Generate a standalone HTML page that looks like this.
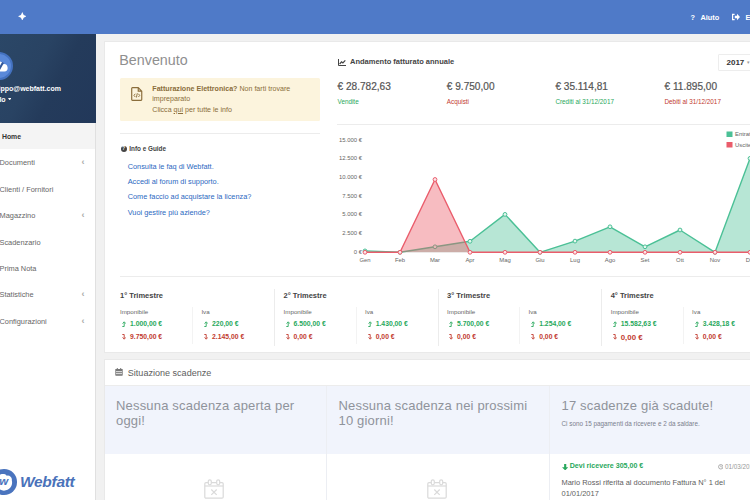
<!DOCTYPE html>
<html lang="it">
<head>
<meta charset="utf-8">
<title>Webfatt - Home</title>
<style>
*{box-sizing:border-box;margin:0;padding:0}
html,body{width:750px;height:500px;overflow:hidden}
body{position:relative;background:#f1f1f1;font-family:"Liberation Sans",sans-serif;color:#444;font-size:7px}
.t{position:absolute;white-space:nowrap;line-height:1}
.abs{position:absolute}
b,.b{font-weight:bold}
/* top bar */
#top{left:0;top:0;width:750px;height:34px;background:#4f7ac8}
#top .t{color:#fff;font-weight:bold;font-size:7.35px}
/* sidebar */
#side{left:0;top:34px;width:96.200px;height:466px;background:#fff;border-right:1px solid #e0e0e0}
#sidehead{left:0;top:0;width:95.500px;height:88.500px;background:linear-gradient(118deg,#2b4767 0%,#294363 38%,#243b5b 58%,#22385a 100%)}
#avatar{left:-15.600px;top:18px;width:28.4px;height:28.4px;border-radius:50%;background:#5a89d9;border:2.2px solid #4472c0}
.nav{color:#666;font-size:7.4px}
.chev{color:#a8a8a8;font-size:9px;font-weight:bold}
#homerow{left:0;top:88.500px;width:95.200px;height:26.200px;background:#f4f4f4}
/* cards */
.card{background:#fff;border:1px solid #e9e9e9}
.hr{background:#ececec;height:1px}
.vr{background:#ececec;width:1px}
.green{color:#28a85c}
.red{color:#c23b30}
a{color:#2b69bf;text-decoration:none}
</style>
</head>
<body>

<!-- TOP BAR -->
<div id="top" class="abs">
  <svg class="abs" style="left:17.700px;top:11.800px" width="8.600" height="8.600" viewBox="0 0 10 10"><path d="M5 0 L6.600 3.400 L10 5 L6.600 6.600 L5 10 L3.400 6.600 L0 5 L3.400 3.400 Z" fill="#fff"/></svg>
  <span class="t" style="left:690.400px;top:13.500px">?</span>
  <span class="t" id="aiuto" style="left:700.500px;top:13.500px">Aiuto</span>
  <svg class="abs" style="left:732px;top:13.300px" width="8" height="8" viewBox="0 0 8 8"><path d="M0 .8h2.600v1.200H1.200v4h1.400v1.200H0z M2.800 2.700h2.200V.8l3 3.200-3 3.200V5.300H2.800z" fill="#fff"/></svg>
  <span class="t" style="left:745.500px;top:13.500px">Esci</span>
</div>

<!-- SIDEBAR -->
<div id="side" class="abs">
  <div id="sidehead" class="abs">
    <div id="avatar" class="abs"></div>
    <svg class="abs" style="left:-8px;top:25px" width="18" height="14" viewBox="0 0 18 14"><path d="M3 12.5a3 3 0 0 1-.3-6 4.5 4.5 0 0 1 8.6-1.3 3.6 3.6 0 0 1 1.2 7.3z" fill="#fff"/><path d="M5.600 5.600l2 4 3.400-6" stroke="#34589a" stroke-width="2" fill="none"/></svg>
    <span class="t b" id="email" style="left:-7.7px;top:51.3px;color:#fff;font-size:7px">filippo@webfatt.com</span>
    <span class="t b" style="left:-6.8px;top:61.6px;color:#fff;font-size:7px">Filo</span>
    <svg class="abs" style="left:7.6px;top:63.8px" width="3.4" height="2.4" viewBox="0 0 34 24"><path d="M0 0h34L17 24z" fill="#fff"/></svg>
  </div>
  <div id="homerow" class="abs"></div>
  <span class="t nav b" style="left:2px;top:99.5px;color:#333;font-size:6.85px">Home</span>
  <span class="t nav" id="nav1" style="left:-0.5px;top:125px">Documenti</span>
  <span class="t nav" style="left:-0.5px;top:152px">Clienti / Fornitori</span>
  <span class="t nav" style="left:-0.5px;top:178px">Magazzino</span>
  <span class="t nav" style="left:-0.5px;top:205px">Scadenzario</span>
  <span class="t nav" style="left:-0.5px;top:231px">Prima Nota</span>
  <span class="t nav" style="left:-0.5px;top:257px">Statistiche</span>
  <span class="t nav" style="left:-0.5px;top:284px">Configurazioni</span>
  <span class="t chev" style="left:81.5px;top:124px">‹</span>
  <span class="t chev" style="left:81.5px;top:177px">‹</span>
  <span class="t chev" style="left:81.5px;top:256px">‹</span>
  <span class="t chev" style="left:81.5px;top:283px">‹</span>
  <!-- logo -->
  <div class="abs" style="left:-8.750px;top:435px;width:25.700px;height:25.700px;border-radius:50%;background:#4a74be"></div>
  <svg class="abs" style="left:-4.900px;top:439.600px" width="18" height="17.100" viewBox="0 0 20 19"><path d="M10 18.500a9 9 0 0 1-8.800-7.500 4 4 0 0 1 2.300-6.800 5.500 5.500 0 0 1 9.600-2.300 4.600 4.600 0 0 1 5.600 5.300 9 9 0 0 1-8.700 11.300z" fill="#fff"/></svg>
  <span class="t" style="left:-0.800px;top:442.300px;color:#4a74be;font-size:11.500px;font-weight:bold;font-style:italic">w</span>
  <span class="t" id="logo" style="left:20px;top:440px;color:#4a72ba;font-size:15.500px;font-weight:bold;font-style:italic;letter-spacing:-.3px">Webfatt</span>
</div>

<!-- CARD 1 -->
<div class="card abs" style="left:104px;top:40.5px;width:660px;height:312px"></div>
<span class="t" id="benv" style="left:119.3px;top:53px;font-size:14.3px;color:#8f8f8f">Benvenuto</span>

<!-- alert -->
<div class="abs" style="left:119.600px;top:77.500px;width:200.600px;height:43.700px;background:#fcf4dd;border-radius:1.500px"></div>
<svg class="abs" style="left:131px;top:86.5px" width="11.7" height="14" viewBox="0 0 10 12"><path d="M1.2 .6h5l3 3v7.2a.6.6 0 0 1-.6.6H1.2a.6.6 0 0 1-.6-.6V1.200a.6.6 0 0 1 .6-.6z M6.200 .6v3h3" fill="none" stroke="#8a6d3b" stroke-width="1"/><path d="M3.700 5.800l-1.200 1.400 1.200 1.400 M6.300 5.800l1.200 1.400-1.200 1.400 M5.400 5.400l-.8 3.600" fill="none" stroke="#8a6d3b" stroke-width=".8"/></svg>
<span class="t" id="al1" style="left:152.3px;top:85.6px;color:#8a6d3b;font-size:7.1px"><b>Fatturazione Elettronica?</b> Non farti trovare</span>
<span class="t" style="left:152.3px;top:96.1px;color:#8a6d3b;font-size:7.1px">impreparato</span>
<span class="t" style="left:152.3px;top:106.7px;color:#8a6d3b;font-size:7.1px">Clicca <u>qui</u> per tutte le info</span>

<div class="hr abs" style="left:120px;top:133px;width:200px"></div>
<svg class="abs" style="left:120.5px;top:145.800px" width="6" height="6" viewBox="0 0 6 6"><circle cx="3" cy="3" r="3" fill="#444"/></svg>
<span class="t b" style="left:121.900px;top:146.400px;font-size:5px;color:#fff">?</span>
<span class="t b" id="info" style="left:129.300px;top:145.800px;font-size:6.350px;color:#444">Info e Guide</span>
<a class="t" id="l1" style="left:127.700px;top:163px;font-size:7.350px">Consulta le faq di Webfatt.</a>
<a class="t" style="left:127.700px;top:177.700px;font-size:7.350px">Accedi al forum di supporto.</a>
<a class="t" style="left:127.700px;top:193px;font-size:7.350px">Come faccio ad acquistare la licenza?</a>
<a class="t" style="left:127.700px;top:208.700px;font-size:7.350px">Vuoi gestire più aziende?</a>

<!-- right panel header -->
<svg class="abs" style="left:337.500px;top:58.500px" width="8" height="7" viewBox="0 0 8 7"><path d="M.5 0v6.500h7.500" fill="none" stroke="#444" stroke-width="1"/><path d="M1.600 5l2-2.200 1.300 1.200 2.400-2.600" fill="none" stroke="#444" stroke-width="1.200"/></svg>
<span class="t b" id="andam" style="left:350px;top:58.300px;font-size:7.500px;color:#444">Andamento fatturato annuale</span>
<div class="abs" style="left:718px;top:53.500px;width:40px;height:17.500px;border:1px solid #ededed;background:#fff;border-radius:1px"></div>
<span class="t b" id="yr" style="left:726.500px;top:59px;font-size:8px;color:#333">2017</span>
<span class="t" style="left:746.500px;top:60px;font-size:5px;color:#999">▾</span>

<!-- totals -->
<span class="t tot" id="tot1" style="left:337.500px;top:81.800px">€ 28.782,63</span>
<span class="t tot" style="left:446.800px;top:81.800px">€ 9.750,00</span>
<span class="t tot" style="left:555.400px;top:81.800px">€ 35.114,81</span>
<span class="t tot" style="left:664.500px;top:81.800px">€ 11.895,00</span>
<span class="t sub green" style="left:337.500px;top:99.300px">Vendite</span>
<span class="t sub red" style="left:446.800px;top:99.300px">Acquisti</span>
<span class="t sub green" style="left:555.400px;top:99.300px">Crediti al 31/12/2017</span>
<span class="t sub red" style="left:664.500px;top:99.300px">Debiti al 31/12/2017</span>
<div class="hr abs" style="left:337px;top:123.600px;width:420px"></div>
<style>
.tot{font-size:10.100px;color:#555;-webkit-text-stroke:.2px #555}
.sub{font-size:6.350px}
.ax{font-size:5.900px;fill:#666;font-family:"Liberation Sans",sans-serif}
</style>

<!-- chart -->
<svg class="abs" style="left:330px;top:120px" width="420" height="150" viewBox="330 120 420 150">
<g class="ax" text-anchor="end"><text x="362" y="253.6">0 €</text><text x="362" y="234.9">2.500 €</text><text x="362" y="216.3">5.000 €</text><text x="362" y="197.6">7.500 €</text><text x="362" y="178.9">10.000 €</text><text x="362" y="160.2">12.500 €</text><text x="362" y="141.6">15.000 €</text></g>
<g class="ax" text-anchor="middle"><text x="365" y="261.500">Gen</text><text x="400" y="261.500">Feb</text><text x="435" y="261.500">Mar</text><text x="470" y="261.500">Apr</text><text x="505" y="261.500">Mag</text><text x="540" y="261.500">Giu</text><text x="575" y="261.500">Lug</text><text x="610" y="261.500">Ago</text><text x="645" y="261.500">Set</text><text x="680" y="261.500">Ott</text><text x="715" y="261.500">Nov</text><text x="750" y="261.500">Dic</text></g>
<path d="M365 250.9 L400 252.3 L435 246.8 L470 241.3 L505 214.4 L540 252.3 L575 241.1 L610 226.8 L645 246.8 L680 230.0 L715 252.3 L750 158.4 L750 252.3 L365 252.3 Z" fill="rgba(75,192,150,.4)"/>
<path d="M365 250.9 L400 252.3 L435 246.8 L470 241.3 L505 214.4 L540 252.3 L575 241.1 L610 226.8 L645 246.8 L680 230.0 L715 252.3 L750 158.4" fill="none" stroke="#4bc096" stroke-width="1.400" stroke-linejoin="round"/>
<g fill="#e6f6ef" stroke="#4bc096" stroke-width="1"><circle cx="365" cy="250.9" r="1.900"/><circle cx="400" cy="252.3" r="1.900"/><circle cx="435" cy="246.8" r="1.900"/><circle cx="470" cy="241.3" r="1.900"/><circle cx="505" cy="214.4" r="1.900"/><circle cx="540" cy="252.3" r="1.900"/><circle cx="575" cy="241.1" r="1.900"/><circle cx="610" cy="226.8" r="1.900"/><circle cx="645" cy="246.8" r="1.900"/><circle cx="680" cy="230.0" r="1.900"/><circle cx="715" cy="252.3" r="1.900"/><circle cx="750" cy="158.4" r="1.900"/></g>
<path d="M365 252.3 L400 252.3 L435 179.5 L470 252.3 L505 252.3 L540 252.3 L575 252.3 L610 252.3 L645 252.3 L680 252.3 L715 252.3 L750 252.3 L750 252.3 L365 252.3 Z" fill="rgba(235,87,100,.4)"/>
<path d="M365 252.3 L400 252.3 L435 179.5 L470 252.3 L505 252.3 L540 252.3 L575 252.3 L610 252.3 L645 252.3 L680 252.3 L715 252.3 L750 252.3" fill="none" stroke="#ea5c6b" stroke-width="1.400" stroke-linejoin="round"/>
<g fill="#fbe6e9" stroke="#ea5c6b" stroke-width="1"><circle cx="365" cy="252.3" r="1.900"/><circle cx="400" cy="252.3" r="1.900"/><circle cx="435" cy="179.5" r="1.900"/><circle cx="470" cy="252.3" r="1.900"/><circle cx="505" cy="252.3" r="1.900"/><circle cx="540" cy="252.3" r="1.900"/><circle cx="575" cy="252.3" r="1.900"/><circle cx="610" cy="252.3" r="1.900"/><circle cx="645" cy="252.3" r="1.900"/><circle cx="680" cy="252.3" r="1.900"/><circle cx="715" cy="252.3" r="1.900"/><circle cx="750" cy="252.3" r="1.900"/></g>
<rect x="726.500" y="131.500" width="6" height="5.500" fill="#4bc096"/><rect x="726.500" y="142" width="6" height="5.500" fill="#ea5c6b"/>
<text class="ax" x="735" y="136.400">Entrate</text><text class="ax" x="735" y="146.900">Uscite</text>
</svg>

<div class="hr abs" style="left:120px;top:275.500px;width:640px"></div>

<!-- quarters -->
<style>
.qt{font-size:7.500px;font-weight:bold;color:#444}
.ql{font-size:6.200px;color:#666}
.qv{font-size:6.800px;font-weight:bold}
</style>
<div id="quarters">
<span class="t qt" style="left:120.0px;top:292px">1° Trimestre</span>
<span class="t ql" style="left:120.0px;top:309.100px">Imponibile</span>
<span class="t ql" style="left:201.4px;top:309.100px">Iva</span>
<svg class="abs" style="left:122.2px;top:320.8px" width="4" height="6" viewBox="0 0 4 6"><path d="M.3 5.500h1.900V1.500 M.6 2.600L2.200 .8l1.600 1.800" fill="none" stroke="#28a85c" stroke-width=".9"/></svg>
<span class="t qv green" style="left:130.0px;top:320.500px">1.000,00 €</span>
<svg class="abs" style="left:122.2px;top:334.3px" width="4" height="6" viewBox="0 0 4 6"><path d="M.3 .5h1.900v4 M.6 3.400L2.200 5.200l1.600-1.800" fill="none" stroke="#c23b30" stroke-width=".9"/></svg>
<span class="t qv red" style="left:130.0px;top:334.100px">9.750,00 €</span>
<svg class="abs" style="left:204.3px;top:320.8px" width="4" height="6" viewBox="0 0 4 6"><path d="M.3 5.500h1.900V1.500 M.6 2.600L2.200 .8l1.600 1.800" fill="none" stroke="#28a85c" stroke-width=".9"/></svg>
<span class="t qv green" style="left:212.1px;top:320.500px">220,00 €</span>
<svg class="abs" style="left:204.3px;top:334.3px" width="4" height="6" viewBox="0 0 4 6"><path d="M.3 .5h1.900v4 M.6 3.400L2.200 5.200l1.600-1.800" fill="none" stroke="#c23b30" stroke-width=".9"/></svg>
<span class="t qv red" style="left:212.1px;top:334.100px">2.145,00 €</span>
<div class="vr abs" style="left:192.2px;top:306.500px;height:37px;background:#f3f3f3"></div>
<span class="t qt" style="left:283.6px;top:292px">2° Trimestre</span>
<span class="t ql" style="left:283.6px;top:309.100px">Imponibile</span>
<span class="t ql" style="left:365.0px;top:309.100px">Iva</span>
<svg class="abs" style="left:285.8px;top:320.8px" width="4" height="6" viewBox="0 0 4 6"><path d="M.3 5.500h1.900V1.500 M.6 2.600L2.200 .8l1.600 1.800" fill="none" stroke="#28a85c" stroke-width=".9"/></svg>
<span class="t qv green" style="left:293.6px;top:320.500px">6.500,00 €</span>
<svg class="abs" style="left:285.8px;top:334.3px" width="4" height="6" viewBox="0 0 4 6"><path d="M.3 .5h1.900v4 M.6 3.400L2.200 5.200l1.600-1.800" fill="none" stroke="#c23b30" stroke-width=".9"/></svg>
<span class="t qv red" style="left:293.6px;top:334.100px">0,00 €</span>
<svg class="abs" style="left:367.9px;top:320.8px" width="4" height="6" viewBox="0 0 4 6"><path d="M.3 5.500h1.900V1.500 M.6 2.600L2.200 .8l1.600 1.800" fill="none" stroke="#28a85c" stroke-width=".9"/></svg>
<span class="t qv green" style="left:375.7px;top:320.500px">1.430,00 €</span>
<svg class="abs" style="left:367.9px;top:334.3px" width="4" height="6" viewBox="0 0 4 6"><path d="M.3 .5h1.900v4 M.6 3.400L2.200 5.200l1.600-1.800" fill="none" stroke="#c23b30" stroke-width=".9"/></svg>
<span class="t qv red" style="left:375.7px;top:334.100px">0,00 €</span>
<div class="vr abs" style="left:355.8px;top:306.500px;height:37px;background:#f3f3f3"></div>
<div class="vr abs" style="left:274.0px;top:288.500px;height:57.500px"></div>
<span class="t qt" style="left:447.1px;top:292px">3° Trimestre</span>
<span class="t ql" style="left:447.1px;top:309.100px">Imponibile</span>
<span class="t ql" style="left:528.5px;top:309.100px">Iva</span>
<svg class="abs" style="left:449.3px;top:320.8px" width="4" height="6" viewBox="0 0 4 6"><path d="M.3 5.500h1.900V1.500 M.6 2.600L2.200 .8l1.600 1.800" fill="none" stroke="#28a85c" stroke-width=".9"/></svg>
<span class="t qv green" style="left:457.1px;top:320.500px">5.700,00 €</span>
<svg class="abs" style="left:449.3px;top:334.3px" width="4" height="6" viewBox="0 0 4 6"><path d="M.3 .5h1.900v4 M.6 3.400L2.200 5.200l1.600-1.800" fill="none" stroke="#c23b30" stroke-width=".9"/></svg>
<span class="t qv red" style="left:457.1px;top:334.100px">0,00 €</span>
<svg class="abs" style="left:531.4px;top:320.8px" width="4" height="6" viewBox="0 0 4 6"><path d="M.3 5.500h1.900V1.500 M.6 2.600L2.200 .8l1.600 1.800" fill="none" stroke="#28a85c" stroke-width=".9"/></svg>
<span class="t qv green" style="left:539.2px;top:320.500px">1.254,00 €</span>
<svg class="abs" style="left:531.4px;top:334.3px" width="4" height="6" viewBox="0 0 4 6"><path d="M.3 .5h1.900v4 M.6 3.400L2.200 5.200l1.600-1.800" fill="none" stroke="#c23b30" stroke-width=".9"/></svg>
<span class="t qv red" style="left:539.2px;top:334.100px">0,00 €</span>
<div class="vr abs" style="left:519.3px;top:306.500px;height:37px;background:#f3f3f3"></div>
<div class="vr abs" style="left:437.5px;top:288.500px;height:57.500px"></div>
<span class="t qt" style="left:610.7px;top:292px">4° Trimestre</span>
<span class="t ql" style="left:610.7px;top:309.100px">Imponibile</span>
<span class="t ql" style="left:692.1px;top:309.100px">Iva</span>
<svg class="abs" style="left:612.9px;top:320.8px" width="4" height="6" viewBox="0 0 4 6"><path d="M.3 5.500h1.900V1.500 M.6 2.600L2.200 .8l1.600 1.800" fill="none" stroke="#28a85c" stroke-width=".9"/></svg>
<span class="t qv green" style="left:620.7px;top:320.500px">15.582,63 €</span>
<svg class="abs" style="left:612.9px;top:334.3px" width="4" height="6" viewBox="0 0 4 6"><path d="M.3 .5h1.900v4 M.6 3.400L2.200 5.200l1.600-1.800" fill="none" stroke="#c23b30" stroke-width=".9"/></svg>
<span class="t qv red" style="left:620.7px;top:333.500px;font-size:7.900px">0,00 €</span>
<svg class="abs" style="left:695.0px;top:320.8px" width="4" height="6" viewBox="0 0 4 6"><path d="M.3 5.500h1.900V1.500 M.6 2.600L2.200 .8l1.600 1.800" fill="none" stroke="#28a85c" stroke-width=".9"/></svg>
<span class="t qv green" style="left:702.8px;top:320.500px">3.428,18 €</span>
<svg class="abs" style="left:695.0px;top:334.3px" width="4" height="6" viewBox="0 0 4 6"><path d="M.3 .5h1.900v4 M.6 3.400L2.200 5.200l1.600-1.800" fill="none" stroke="#c23b30" stroke-width=".9"/></svg>
<span class="t qv red" style="left:702.8px;top:334.100px">0,00 €</span>
<div class="vr abs" style="left:682.9px;top:306.500px;height:37px;background:#f3f3f3"></div>
<div class="vr abs" style="left:601.1px;top:288.500px;height:57.500px"></div>
</div><!--/q-->

<!-- CARD 2 -->
<div class="card abs" style="left:104px;top:359.400px;width:660px;height:160px"></div>
<div class="abs" style="left:105px;top:386.300px;width:650px;height:68px;background:#f1f4fc"></div>
<div class="hr abs" style="left:105px;top:385.400px;width:650px"></div>
<div class="vr abs" style="left:326px;top:386px;height:120px;background:#eceef3"></div>
<div class="vr abs" style="left:549px;top:386px;height:120px;background:#eceef3"></div>

<svg class="abs" style="left:115px;top:368px" width="8" height="8" viewBox="0 0 8 8"><rect x=".3" y="1" width="7.400" height="6.700" rx=".6" fill="#777"/><rect x="1.800" y="0" width="1" height="2" fill="#777"/><rect x="5.200" y="0" width="1" height="2" fill="#777"/><g fill="#fff"><rect x="1.300" y="3" width="1.400" height="1.200"/><rect x="3.300" y="3" width="1.400" height="1.200"/><rect x="5.300" y="3" width="1.400" height="1.200"/><rect x="1.300" y="5" width="1.400" height="1.200"/><rect x="3.300" y="5" width="1.400" height="1.200"/><rect x="5.300" y="5" width="1.400" height="1.200"/></g></svg>
<span class="t" id="sit" style="left:127.800px;top:368.900px;font-size:9.050px;color:#606060">Situazione scadenze</span>

<span class="t big" id="big1" style="left:116px;top:399.400px">Nessuna scadenza aperta per</span>
<span class="t big" style="left:116px;top:413.600px">oggi!</span>
<span class="t big" id="big2" style="left:338.500px;top:399.400px">Nessuna scadenza nei prossimi</span>
<span class="t big" style="left:338.500px;top:413.600px">10 giorni!</span>
<span class="t big" id="big3" style="left:561.500px;top:399.400px">17 scadenze già scadute!</span>
<span class="t" style="left:561.500px;top:421.400px;font-size:6.330px;color:#7b808c">Ci sono 15 pagamenti da ricevere e 2 da saldare.</span>
<style>
.big{font-size:13px;letter-spacing:.18px;color:#8f939b}
</style>

<!-- empty icons -->
<svg class="abs" style="left:204.400px;top:478.500px" width="20" height="20" viewBox="0 0 20 20"><g fill="none" stroke="#dadada" stroke-width="1.200"><rect x=".8" y="3.600" width="18.400" height="15.600" rx="1.200"/><path d="M.8 7h18.400"/><rect x="4.300" y=".8" width="3" height="5" rx="1.500" fill="#fff"/><rect x="12.700" y=".8" width="3" height="5" rx="1.500" fill="#fff"/><path d="M7.300 10.500l5.400 5.400 M12.700 10.500l-5.400 5.400"/></g></svg>
<svg class="abs" style="left:427.400px;top:478.500px" width="20" height="20" viewBox="0 0 20 20"><g fill="none" stroke="#dadada" stroke-width="1.200"><rect x=".8" y="3.600" width="18.400" height="15.600" rx="1.200"/><path d="M.8 7h18.400"/><rect x="4.300" y=".8" width="3" height="5" rx="1.500" fill="#fff"/><rect x="12.700" y=".8" width="3" height="5" rx="1.500" fill="#fff"/><path d="M7.300 10.500l5.400 5.400 M12.700 10.500l-5.400 5.400"/></g></svg>

<!-- overdue item -->
<svg class="abs" style="left:561.700px;top:463.800px" width="6.400" height="6.400" viewBox="0 0 6 6"><path d="M2 0h2v3h2L3 6 0 3h2z" fill="#28a85c"/></svg>
<span class="t b green" id="devi" style="left:569.700px;top:463.200px;font-size:7.080px">Devi ricevere 305,00 €</span>
<svg class="abs" style="left:717.800px;top:464px" width="5.600" height="5.600" viewBox="0 0 5 5"><circle cx="2.500" cy="2.500" r="2" fill="none" stroke="#999" stroke-width=".7"/><path d="M2.500 1.300v1.300h1" stroke="#999" stroke-width=".6" fill="none"/></svg>
<span class="t" style="left:725px;top:463.700px;font-size:6.300px;color:#999">01/03/2017</span>
<span class="t" id="mario" style="left:561.500px;top:479.300px;font-size:7.460px;color:#606060">Mario Rossi riferita al documento Fattura N° 1 del</span>
<span class="t" style="left:561.500px;top:490px;font-size:7.460px;color:#606060">01/01/2017</span>

</body>
</html>
